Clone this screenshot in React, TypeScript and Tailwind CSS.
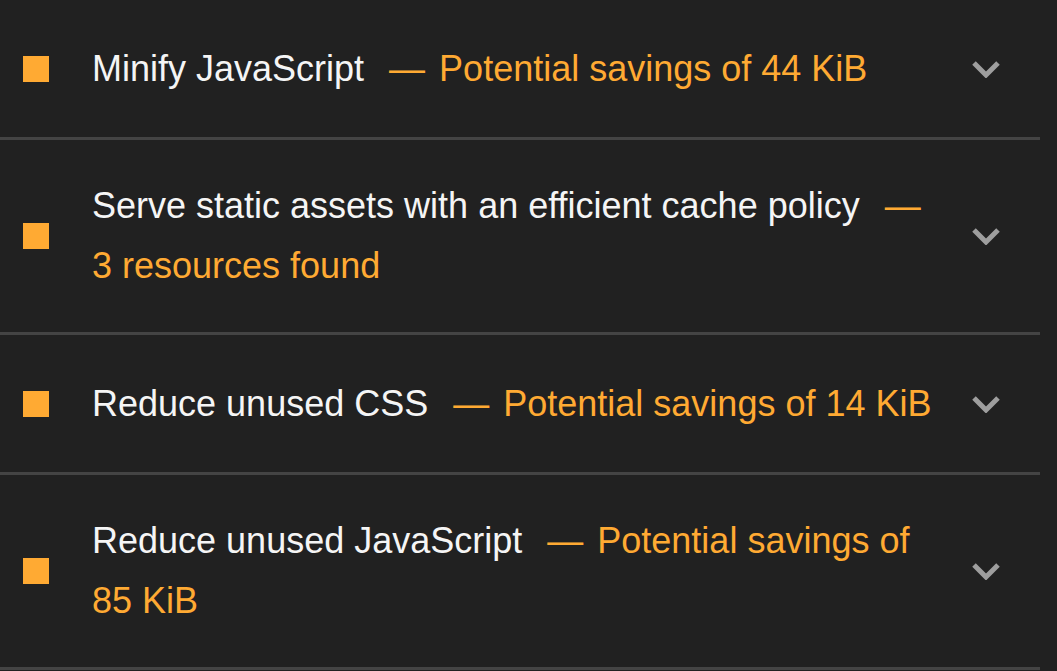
const audits = [
  { title: "Minify JavaScript", detail: "Potential savings of 44 KiB" },
  { title: "Serve static assets with an efficient cache policy", detail: "3 resources found" },
  { title: "Reduce unused CSS", detail: "Potential savings of 14 KiB" },
  { title: "Reduce unused JavaScript", detail: "Potential savings of 85 KiB" },
]

function Chevron() {
  return (
    <svg width="28" height="18" viewBox="0 0 28 18" fill="none">
      <path d="M2 3 L14 15 L26 3" stroke="#9e9e9e" strokeWidth="5" />
    </svg>
  )
}

export default function App() {
  return (
    <div className="min-h-screen bg-[#212121] font-['Liberation_Sans',Arial,sans-serif] text-[36px] leading-[60px]">
      <div className="w-[1040px]">
        {audits.map((a) => (
          <div key={a.title} className="flex items-center border-b-[3px] border-[#444444] py-[36px]">
            <div className="ml-[23px] w-[26px] h-[26px] shrink-0 bg-[#ffaa33]" />
            <div className="ml-[43px] w-[855px] min-h-[65px] flex items-center text-[#f5f5f5]">
              <div>
                {a.title}
                <span className="ml-[25px] text-[#ffaa33]">
                  <span className="mr-[4px]">—</span> {a.detail}
                </span>
              </div>
            </div>
            <div className="ml-[25px] flex items-center">
              <Chevron />
            </div>
          </div>
        ))}
      </div>
    </div>
  )
}
